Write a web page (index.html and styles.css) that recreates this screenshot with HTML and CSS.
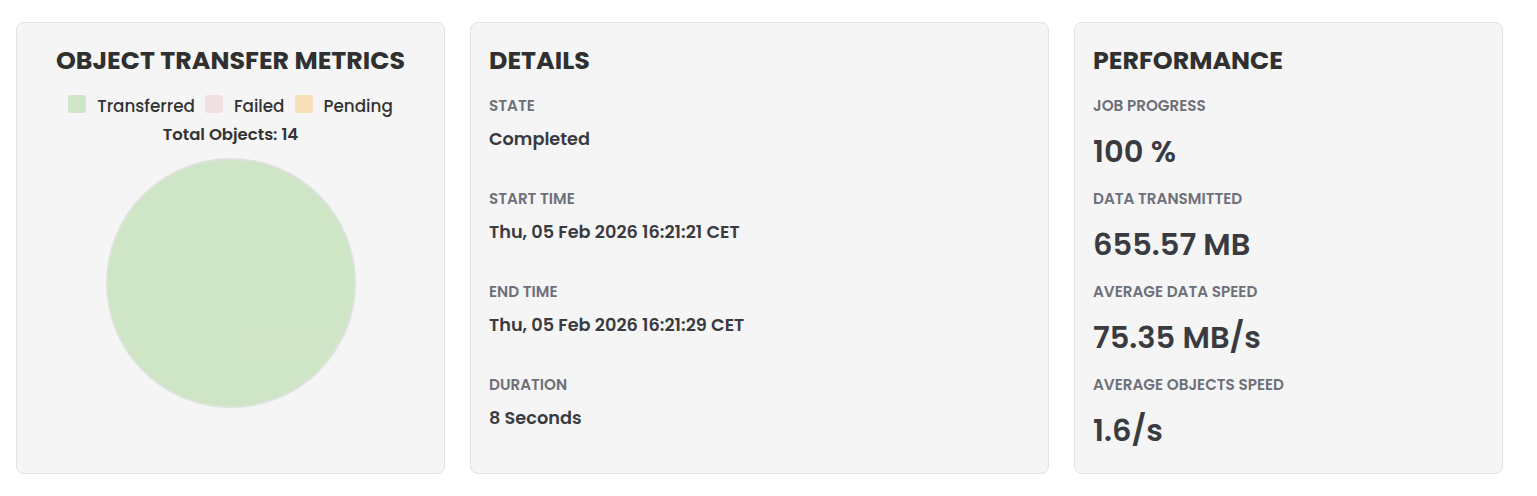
FILE: index.html
```html
<!DOCTYPE html>
<html>
<head>
<meta charset="utf-8">
<link rel="stylesheet" href="styles.css">
</head>
<body>
<div class="grid">
  <section class="card card-metrics">
    <h2 class="title center">OBJECT TRANSFER METRICS</h2>
    <div class="legend">
      <span class="item"><span class="sw sw-green"></span>Transferred</span>
      <span class="item"><span class="sw sw-pink"></span>Failed</span>
      <span class="item"><span class="sw sw-orange"></span>Pending</span>
    </div>
    <div class="total">Total Objects: 14</div>
    <div class="pie-wrap">
      <svg class="pie" width="252" height="252" viewBox="0 0 252 252">
        <circle cx="126" cy="126" r="124" fill="#cee6c5" stroke="#dbe3da" stroke-width="2"/>
      </svg>
      <div class="tip"></div>
    </div>
  </section>

  <section class="card">
    <h2 class="title">DETAILS</h2>
    <div class="field">
      <div class="label">STATE</div>
      <div class="value">Completed</div>
    </div>
    <div class="field">
      <div class="label">START TIME</div>
      <div class="value">Thu, 05 Feb 2026 16:21:21 CET</div>
    </div>
    <div class="field">
      <div class="label">END TIME</div>
      <div class="value">Thu, 05 Feb 2026 16:21:29 CET</div>
    </div>
    <div class="field">
      <div class="label">DURATION</div>
      <div class="value">8 Seconds</div>
    </div>
  </section>

  <section class="card">
    <h2 class="title">PERFORMANCE</h2>
    <div class="field">
      <div class="label">JOB PROGRESS</div>
      <div class="big">100 %</div>
    </div>
    <div class="field">
      <div class="label">DATA TRANSMITTED</div>
      <div class="big">655.57 MB</div>
    </div>
    <div class="field">
      <div class="label">AVERAGE DATA SPEED</div>
      <div class="big">75.35 MB/s</div>
    </div>
    <div class="field">
      <div class="label">AVERAGE OBJECTS SPEED</div>
      <div class="big">1.6/s</div>
    </div>
  </section>
</div>
</body>
</html>
```

FILE: styles.css
```css
* { box-sizing: border-box; }
html, body { margin: 0; padding: 0; background: #ffffff; }
body {
  font-family: "Poppins", Inter, "Noto Sans", sans-serif;
  color: #333333;
}
.grid {
  display: grid;
  grid-template-columns: 429px 579px 429px;
  column-gap: 25px;
  padding: 22px 0 0 16px;
}
.card {
  height: 452px;
  background: #f5f5f5;
  border: 1px solid #e1e1e6;
  border-radius: 8px;
  padding: 23px 18px 0 18px;
}
.title {
  margin: 0;
  font-size: 25.3px;
  line-height: 28px;
  font-weight: 700;
  color: #303030;
}
.center { text-align: center; }
.legend {
  display: flex;
  justify-content: center;
  gap: 10px;
  margin-top: 22px;
  font-size: 16.8px;
  font-weight: 500;
  color: #333;
  line-height: 20px;
}
.item { display: flex; align-items: center; gap: 11px; }
.sw { width: 18px; height: 18px; border-radius: 3px; display: inline-block; position: relative; top: -2px; }
.sw-green { background: #cfe6c6; }
.sw-pink { background: #f2dfe1; }
.sw-orange { background: #f8dfb8; }
.total {
  text-align: center;
  font-size: 16.5px;
  font-weight: 600;
  line-height: 20px;
  margin-top: 9px;
  color: #333;
}
.pie-wrap {
  position: relative;
  display: flex;
  justify-content: center;
  margin-top: 12px;
}
.pie { display: block; }
.tip {
  position: absolute;
  left: 205px;
  top: 173px;
  width: 134px;
  height: 28px;
  border-radius: 6px;
  background: rgba(236, 238, 236, 0.1);
}
.field { margin-top: 23px; }
.field + .field { margin-top: 0; }
.label {
  font-size: 15.2px;
  line-height: 18px;
  font-weight: 600;
  color: #6d7079;
}
.value {
  margin-top: 13px;
  font-size: 17.7px;
  line-height: 22px;
  font-weight: 600;
  color: #3a3b41;
  height: 62px;
}
.big {
  margin-top: 18px;
  font-size: 30.5px;
  line-height: 38px;
  font-weight: 600;
  color: #3a3b41;
  height: 57px;
}
```
